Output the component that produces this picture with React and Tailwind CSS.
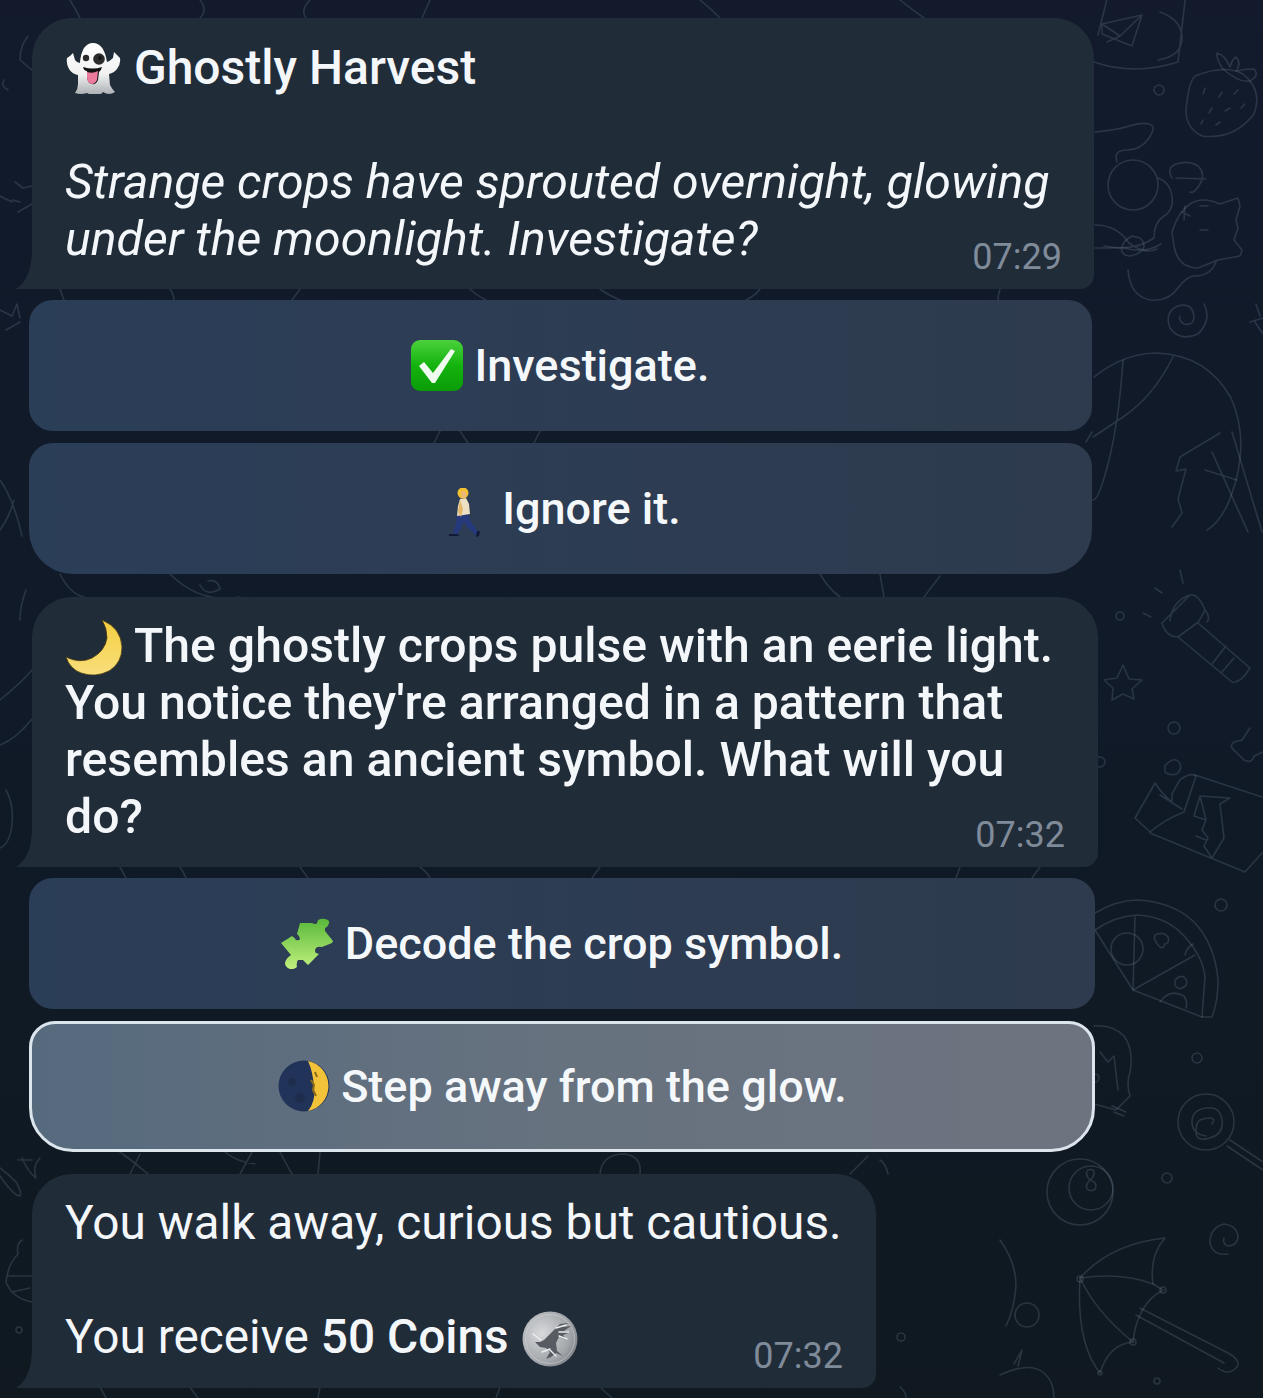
const doodle = "fill-none stroke-[#8fa3b8]/20 stroke-[1.6]";

function Doodles() {
  return (
    <svg className="absolute inset-0" width="1263" height="1398" viewBox="0 0 1263 1398">
      <g className={doodle} strokeLinecap="round" strokeLinejoin="round">
        {/* mug */}
        <path d="M1094 62q40 14 84 0l8-70M1108 -5l-10 40M1160 12q22 8 22 26t-24 22" />
        <path d="M1102 24l40-9-10 31-30-12zM1102 24l18 12 22-21M1120 36l-13 6" />
        <circle cx="1159" cy="90" r="5" />
        {/* strawberry */}
        <path d="M1195 76q30-12 48 -2 20 16 11 40-20 26-52 22-20-10-15-34 2-20 8-26z" />
        <path d="M1222 68q-6-10-5-15 8 2 13 14 2-8 6-10 6 6 0 14 8-2 18-2 6 6-4 12-12 2-28-13z" />
        <path d="M1205 88l-2 6M1222 92l-3 5M1238 90l-4 4M1212 108l-3 5M1230 108l-5 3M1245 104l-4 4M1203 120l-2 4M1220 122l-4 3" />
        {/* planet and cat */}
        <path d="M1095 132q22-2 34-6t20-2 0 14-22 12-10 12" />
        <circle cx="1133" cy="185" r="25" />
        <path d="M1158 178q12 4 14 18t-8 20-10 22q-20 14-50 8M1095 225q22 0 34 18 16 12 28 6M1128 270q2 26 22 30 18 2 28-12t20-12q14-2 18-14" />
        <path d="M1172 178q-6-10 4-14 12-4 22 2 8 8 2 18t-10 8M1176 178l30 1" />
        <path d="M1172 232q6-20 18-28t30 0l18-6 2 8-4 14 2 8-4 12 8 10-2 6-22 4-20 8q-20 0-24-22z" />
        <path d="M1182 212l8 4M1185 206l-1 14M1200 206h8M1200 230h8" />
        <path d="M1132 236q-12 6-10 16 6 8 18 0 8-6 0-14zM1095 248h30q20 6 36-4" />
        {/* swirl */}
        <path d="M1204 304q8 16-6 30-18 8-28-6-6-16 8-22 14-4 16 10 0 10-10 8-6-4-4-8" />
        <path d="M1256 304l4 12M1250 322l13 -4M1255 322l8 12" />
        {/* globe */}
        <path d="M1094 377q30-24 63-24 50 2 74 45 16 36 6 78t-30 54" />
        <path d="M1123 360q-4 60-14 100t-16 40M1173 357q-20 40-50 60t-30 20" />
        <path d="M1220 433l-40 24-4 14 10-2-8 30 4 14-10 14M1237 480l-32 -10M1232 432l30 100M1212 452l36 80" />
        {/* flashlight */}
        <path d="M1162 623l28-28q8-2 15 15-6 12-8 13l-19 14q-12 0-16-14zM1190 595q-18 6-20 26M1178 637l54 45q8 2 18-14l-52-45M1212 664l14-18M1222 672l12-14M1205 610q6 8 2 12" />
        <path d="M1180 570l3 13M1155 588l7 5M1143 613l8 4" />
        {/* star */}
        <path d="M1123 665l6 14 13 1-10 9 2 10-11-5-11 6 1-12-9-8 13-2z" />
        <circle cx="1120" cy="616" r="4" /><circle cx="1174" cy="728" r="6" /><circle cx="1221" cy="905" r="6" /><circle cx="1100" cy="762" r="5" />
        {/* chip bag */}
        <path d="M1155 783l-20 35 15 14q14-12 34-20l12-36q-6-4-16 4-4 6-8 14 0 4 0 8-10-8-17-19zM1160 795l22 14" />
        <path d="M1165 766q8-10 14-4 4 6-2 12-8 2-12-2z" />
        <path d="M1195 775l67 22M1150 833l95 39 17-19M1200 796l6 24-4 10 6 8-4 8 8 12 12-20-4-34 10-6zM1200 796l-6 20 12 4M1196 836l10 4" />
        <path d="M1250 728l-8 12-8 2q-6 4 2 10l8 8q8 4 10-4l9-4" />
        {/* pizza */}
        <path d="M1095 913q22-13 43-13 36 2 57 23 20 22 23 57 0 22-6 37l-10 0-69-27-38-60" />
        <path d="M1095 930q20-14 43-15 30 2 47 22 18 20 20 40l-3 40M1135 917l-2 73 62-35" />
        <circle cx="1127" cy="949" r="16" />
        <path d="M1155 935q8-4 13 2 2 6-3 7-2 6-6 2-6-6-4-11zM1175 980q6-6 10-2 4 6-1 9-6 4-9-2zM1160 1002q10-14 24-6 4 6 2 12M1185 955q2-8 8-11" />
        <circle cx="1095" cy="1078" r="4" />
        {/* bulb */}
        <path d="M1094 1026q18-2 30 10 10 14 6 36-4 12 0 24l-14 14-22-6M1100 1052l8 10 6-6 4 34" />
        <path d="M1112 1106l14 6M1114 1112l10 4" />
        <circle cx="1197" cy="1058" r="5" /><circle cx="1167" cy="1178" r="5" /><circle cx="1157" cy="1381" r="3" />
        {/* lollipop */}
        <circle cx="1206" cy="1122" r="28" />
        <path d="M1206 1136q-14-2-14-14t14-14 16 12-12 18-14-6 4-12 10-2 2 6M1230 1140l33 22M1227 1146l36 24" />
        {/* 8 ball */}
        <circle cx="1080" cy="1192" r="33" />
        <circle cx="1091" cy="1188" r="22" />
        <path d="M1090 1180q-6-6-2-10 6-2 6 3 0 4-4 7-6 6-2 10 8 2 8-4 0-4-6-6z" />
        <path d="M1228 1254q-16 2-18-12 0-14 14-18 14 2 14 14-2 8-10 8-6-2-4-8" />
        {/* umbrella */}
        <path d="M1080 1278q30-34 85-40-16 18-12 46l10 6q-26 14-30 52-24 2-33 31-24-30-20-95z" />
        <path d="M1080 1278q42-6 73 6M1080 1278q16 34 53 64M1140 1308l90 46q12 8 6 14-8 8-18 0M1136 1315l88 48" />
        <circle cx="1080" cy="1279" r="3" /><circle cx="1163" cy="1290" r="3" /><circle cx="1133" cy="1342" r="3" /><circle cx="1100" cy="1373" r="2" />
        {/* pear */}
        <path d="M1000 1240q16 22 16 46-2 24-10 40" />
        <circle cx="1027" cy="1315" r="12" />
        <path d="M1000 1375q30-14 44-2 10 8 10 25M1018 1366l4-16-8 14" />
        {/* left side */}
        <path d="M28 36q-8 10-8 24l12 10M4 80q-4 6 4 10" />
        <path d="M15 182l8 6 9-2M12 200l8 2M18 212l14-8M0 196l12 6" />
        <path d="M0 310l12 6 5 -12 3 14M6 330l14-8" />
        <path d="M0 530q10-14 14-30M0 480q14 20 22 56M0 700q22-18 32-30M0 745q16-6 32-26M20 620q0-14 6-30M6 790q8 14 6 34t-12 24" />
        <path d="M22 1158q6 14 14 20-4-12 4-20M32 1160h-14" />
        <path d="M0 1168q8 6 16 14 6 10 4 14-6 0-20-20" />
        <path d="M22 1240q-6 4-4 14-10 10-12 28 6 16 26 20M8 1276h24M12 1292l18-4" />
        <circle cx="19" cy="1330" r="3" />
        {/* between messages */}
        <path d="M120 1152q14 10 28 22M130 1174l10-20M225 1152q12 10 30 12M240 1174l12-22M280 1152q4 8 12 22M320 1152l-2 22M600 1174q2-20 24-20 18 2 16 20M850 1174q10-10 18 -18M880 1160q6 4 8 14" />
        <path d="M60 574q10 20 24 23M170 574q30 30 70 23M200 585q6 12 20 4-2-10-12-8M820 574q8 14 20 23M940 576l-16 21M880 574l4 23" />
        <path d="M70 0q6 10 10 18M200 0q8 10 0 18M310 0q-10 10-4 18M430 0l-8 18M700 0q10 8 20 18M900 0q10 8 24 18" />
        <path d="M60 289l4 11M170 289q4 6 4 11M300 289l-8 11M470 289q6 6 16 11M600 289q8 6 20 11M760 289q-4 6-14 11M1000 289q-2 6 -2 11" />
        <path d="M440 431l-6 12M540 431l-6 12M460 431q4 6 8 12M1092 432l-6 10" />
        <path d="M120 867l6 11M180 867q4 6 6 11M300 867l8 11M420 867q8 6 10 11M600 867l-8 11M960 867l-4 11M1040 867l-8 11" />
        <path d="M100 1387l6 11M190 1387q4 6 8 11M320 1387l-2 11M500 1387l-4 11M600 1387q6 6 12 11M900 1387q6 5 6 11" />
        <circle cx="901" cy="1337" r="4" />
      </g>
    </svg>
  );
}

function Tail() {
  return (
    <svg className="absolute bottom-0 left-[-16px]" width="36" height="40" viewBox="0 0 36 40">
      <path d="M16 0q0 30-16 40h36V0z" fill="#212c39" />
    </svg>
  );
}

function Ghost() {
  return (
    <svg className="mr-[13px] inline-block align-[-10px]" width="56" height="52" viewBox="0 0 56 52">
      <defs>
        <linearGradient id="ghostBody" x1="0" y1="0" x2="0" y2="1">
          <stop offset="0" stopColor="#ffffff" />
          <stop offset="0.6" stopColor="#f1f1f1" />
          <stop offset="1" stopColor="#a9aeb2" />
        </linearGradient>
      </defs>
      <path d="M15 20Q17 1 28 1t14 19q3-1 6-4l1-6 3 3 3 3q1 6-3 11-3 4-8 5l1 11q2 4 5 7-6 4-12 0-2 3-8 3-5 0-8-2-6 2-12 0 3-4 3-9v-9q-6-1-9-6-3-5-2-11l3-2 3-3 2 7q2 3 5 3z" fill="url(#ghostBody)" />
      <circle cx="21" cy="16" r="3.2" fill="#2a2a2a" />
      <circle cx="34" cy="17" r="5.8" fill="#2b2b2b" />
      <circle cx="35" cy="16" r="1.8" fill="#111" />
      <path d="M18 25q10 3 19 0-1 4-3 5l-1 8q-2 5-6 4-5-1-5-8v-5q-3 0-4-4z" fill="#111" />
      <path d="M22 30q6 2 11-1l-1 9q-2 4-5 4-5-1-5-7z" fill="#ec7a9d" />
    </svg>
  );
}

function CheckBox() {
  return (
    <svg className="-ml-[2px] mr-[11px] inline-block align-[-11px]" width="54" height="53" viewBox="0 0 54 53">
      <defs>
        <linearGradient id="checkBg" x1="0" y1="0" x2="0" y2="1">
          <stop offset="0" stopColor="#4bd13c" />
          <stop offset="0.5" stopColor="#14b30e" />
          <stop offset="1" stopColor="#0b9c08" />
        </linearGradient>
      </defs>
      <rect x="1" y="1" width="52" height="51" rx="9" fill="url(#checkBg)" />
      <path d="M9 27l5-4 9 11L41 10l4 2-20 32h-3z" fill="#f0fbef" />
    </svg>
  );
}

function Walker() {
  return (
    <svg className="ml-[8px] mr-[20px] inline-block align-[-14px]" width="34" height="50" viewBox="0 0 34 50">
      <path d="M9 27l11-1 3 8 8 11-3 2-9-8-3-6-3 7-3 6-5-1 3-9z" fill="#26397c" />
      <path d="M12 11l6-1 3 6 1 10-13 2 1-10z" fill="#ecdfc2" />
      <path d="M12 12l-2 12 3 5 2-8z" fill="#e3b767" />
      <circle cx="15" cy="5" r="5.5" fill="#f2c232" />
      <path d="M13 3l5 1v5l-4 1z" fill="#edb77d" />
      <path d="M1 46h9l1 2H1zM29 43l3 0-1 5-3 1z" fill="#101a38" />
    </svg>
  );
}

function Moon() {
  return (
    <svg className="-mb-[1px] mr-[11px] inline-block align-[-12px]" width="58" height="56" viewBox="0 0 58 56">
      <defs>
        <linearGradient id="moonBg" x1="0" y1="0" x2="0" y2="1">
          <stop offset="0" stopColor="#f5cf3f" />
          <stop offset="1" stopColor="#f8de7c" />
        </linearGradient>
      </defs>
      <path d="M37 1q19 8 20 27 0 16-13 24-14 7-28 2Q5 50 1 38q14 7 26 1 13-7 15-20 0-10-5-18z" fill="url(#moonBg)" stroke="#4d3b10" strokeWidth="0.8" />
    </svg>
  );
}

function Puzzle() {
  return (
    <svg className="mr-[11px] inline-block align-[-10px]" width="53" height="52" viewBox="0 0 53 52">
      <defs>
        <linearGradient id="puzzleBg" x1="0" y1="0" x2="0" y2="1">
          <stop offset="0" stopColor="#58b83a" />
          <stop offset="1" stopColor="#c2f17d" />
        </linearGradient>
      </defs>
      <path d="M19 6L31 6Q35 8 36 6L37 3Q41 1 44 2Q49 3 48 6Q47 10 44 11L44 14L52 24L51 26L41 30Q37 29 35 31Q33 34 35 36L38 37L27 48L22 43L17 43Q15 46 16 50Q12 53 9 52Q4 50 4 46Q5 41 10 38L0 26L11 19Q14 21 15 23Q18 24 19 22Q19 19 16 17Z" fill="url(#puzzleBg)" />
    </svg>
  );
}

function MoonPhase() {
  return (
    <svg className="ml-[1px] mr-[11px] inline-block align-[-10px]" width="52" height="52" viewBox="0 0 52 52">
      <circle cx="26" cy="26" r="25.5" fill="#22335a" />
      <path d="M30 1a25.5 25.5 0 0 1 0 50q8-10 6-24-1-15-6-26z" fill="#f2c239" />
      <path d="M33 20l3 5-1 5 3 6M37 12l2 5" stroke="#8b6a18" strokeWidth="2" fill="none" />
      <circle cx="14" cy="22" r="4" fill="#1e2d4c" />
      <circle cx="22" cy="38" r="5" fill="#1e2d4c" />
    </svg>
  );
}

function Coin() {
  return (
    <svg className="-mb-[2px] ml-[1px] inline-block align-[-12px]" width="56" height="56" viewBox="0 0 56 56">
      <defs>
        <radialGradient id="coinBg" cx="0.35" cy="0.4" r="0.8">
          <stop offset="0" stopColor="#d8dadc" />
          <stop offset="0.65" stopColor="#a2a5a9" />
          <stop offset="1" stopColor="#6a6e73" />
        </radialGradient>
      </defs>
      <circle cx="28" cy="28" r="27.5" fill="url(#coinBg)" />
      <circle cx="28" cy="28" r="24.5" fill="none" stroke="#cfd2d5" strokeWidth="1" opacity="0.6" />
      <path d="M22 29l8-8 8-8 8-1-5 4 8-1-7 5 7 1-8 3 4 5-8-3-3 6 1 8 6 5-7-3-5 4-5 2 4-7-4-4-6-1-5-5 5 0z" fill="#585c62" />
      <path d="M34 17l10-3M37 21l10 0M37 25l8 3M28 39l6 6M20 41l8-3M11 23l8 6" stroke="#eceef0" strokeWidth="1.4" fill="none" strokeLinecap="round" />
    </svg>
  );
}

function Bubble({ time, width, top, right, children }) {
  return (
    <div className={`relative ml-[3px] rounded-t-[40px] rounded-br-[14px] bg-[#212c39] pb-[22px] pl-[33px] text-[48px] leading-[57px] text-[#f4f7fa] ${width} ${top}`}>
      <Tail />
      {children}
      <span className={`absolute bottom-[12px] text-[36px] leading-[40px] text-[#7f8b99] ${right}`}>{time}</span>
    </div>
  );
}

function ChoiceButton({ width, shape, children }) {
  return (
    <div className={`flex h-[131px] items-center justify-center bg-gradient-to-r from-[#2b3e58] to-[#2e3b4e] text-[45px] font-medium text-[#f5f8fb] ${width} ${shape}`}>
      <span>{children}</span>
    </div>
  );
}

export default function App() {
  return (
    <div className="relative h-[1398px] w-[1263px] overflow-hidden bg-gradient-to-b from-[#121a2b] via-[#101a28] to-[#101920] font-['Roboto',sans-serif]">
      <Doodles />
      <div className="relative flex flex-col pl-[29px] pt-[18px]">
        <Bubble time="07:29" width="w-[1062px]" top="pt-[21px]" right="right-[32px]">
          <p className="font-medium"><Ghost />Ghostly Harvest</p>
          <p className="h-[57px]"></p>
          <p className="text-[48.2px] italic">Strange crops have sprouted overnight, glowing<br />under the moonlight. Investigate?</p>
        </Bubble>

        <div className="mt-[11px]">
          <ChoiceButton width="w-[1063px]" shape="rounded-[24px]"><CheckBox />Investigate.</ChoiceButton>
        </div>
        <div className="mt-[12px]">
          <ChoiceButton width="w-[1063px]" shape="rounded-t-[24px] rounded-b-[44px]"><Walker />Ignore it.</ChoiceButton>
        </div>

        <div className="mt-[23px]">
          <Bubble time="07:32" width="w-[1066px]" top="pt-[20px]" right="right-[33px]">
            <p className="text-[48.15px] font-medium"><Moon />The ghostly crops pulse with an eerie light.<br />You notice they're arranged in a pattern that<br />resembles an ancient symbol. What will you<br />do?</p>
          </Bubble>
        </div>

        <div className="mt-[11px]">
          <ChoiceButton width="w-[1066px]" shape="rounded-[24px]"><Puzzle />Decode the crop symbol.</ChoiceButton>
        </div>
        <div className="mt-[12px] flex h-[131px] w-[1066px] items-center justify-center rounded-t-[26px] rounded-b-[44px] border-[3px] border-[#dde5ec] bg-gradient-to-r from-[#566a7e] via-[#67727f] to-[#6d7480] text-[45px] font-medium text-[#f5f8fb]">
          <span><MoonPhase />Step away from the glow.</span>
        </div>

        <div className="mt-[22px]">
          <Bubble time="07:32" width="w-[844px]" top="pt-[21px]" right="right-[33px]">
            <div className="text-[47.8px]">
              <p>You walk away, curious but cautious.</p>
              <p className="h-[57px]"></p>
              <p>You receive <span className="font-medium">50 Coins</span> <Coin /></p>
            </div>
          </Bubble>
        </div>
      </div>
    </div>
  );
}
